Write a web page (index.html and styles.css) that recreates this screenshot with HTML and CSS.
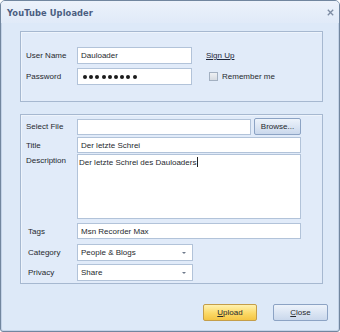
FILE: index.html
```html
<!DOCTYPE html>
<html>
<head>
<meta charset="utf-8">
<link rel="stylesheet" href="styles.css">
</head>
<body>
<div class="window">
  <div class="titlebar">
    <span class="title">YouTube Uploader</span>
    <svg class="close-x" width="7" height="7" viewBox="0 0 7 7"><path d="M0.8 0.8 L6.2 6.2 M6.2 0.8 L0.8 6.2" stroke="#7d8ca3" stroke-width="1.3" fill="none"/></svg>
  </div>
  <div class="group g1">
    <div class="row r-user">
      <span class="lbl">User Name</span>
      <div class="field w-user">Dauloader</div>
      <a class="link">Sign Up</a>
    </div>
    <div class="row r-pass">
      <span class="lbl">Password</span>
      <div class="field w-user pw"><i></i><i></i><i></i><i></i><i></i><i></i><i></i><i></i><i></i></div>
      <span class="check"></span>
      <span class="check-lbl">Remember me</span>
    </div>
  </div>
  <div class="group g2">
    <div class="row r-file">
      <span class="lbl">Select File</span>
      <div class="field w-file"></div>
      <div class="btn btn-blue browse">Browse...</div>
    </div>
    <div class="row r-title">
      <span class="lbl">Title</span>
      <div class="field w-full">Der letzte Schrei</div>
    </div>
    <div class="row r-desc">
      <span class="lbl lbl-top">Description</span>
      <div class="field w-full area">Der letzte Schrei des Dauloaders<span class="caret"></span></div>
    </div>
    <div class="row r-tags">
      <span class="lbl lbl-in">Tags</span>
      <div class="field w-full">Msn Recorder Max</div>
    </div>
    <div class="row r-cat">
      <span class="lbl lbl-in">Category</span>
      <div class="field w-sel sel">People &amp; Blogs<span class="arrow"></span></div>
    </div>
    <div class="row r-priv">
      <span class="lbl lbl-in">Privacy</span>
      <div class="field w-sel sel">Share<span class="arrow"></span></div>
    </div>
  </div>
  <div class="buttons">
    <div class="btn btn-yellow upload"><u>U</u>pload</div>
    <div class="btn btn-blue close"><u>C</u>lose</div>
  </div>
</div>
</body>
</html>
```
FILE: styles.css
```css
* { box-sizing: border-box; }
html, body { margin: 0; padding: 0; background: #ffffff; }
body { font-family: "Liberation Sans", Arial, sans-serif; font-size: 8px; color: #26292e; }

.window {
  width: 340px;
  height: 332px;
  border: 1px solid #71869f;
  border-radius: 5px 5px 3px 3px;
  background: #dde9f8;
  box-shadow: inset 0 0 0 1px #c3d3e8;
  overflow: hidden;
}

.titlebar {
  height: 22px;
  display: flex;
  align-items: center;
  justify-content: space-between;
  padding: 1px 5px 0 6px;
  background: linear-gradient(#ecf2fb, #e0eaf8);
}
.title {
  font-family: "DejaVu Sans", Verdana, sans-serif;
  font-weight: bold;
  font-size: 8.3px;
  letter-spacing: 0.1px;
  color: #4a5d80;
}
.close-x { display: block; }

.group {
  width: 303px;
  margin-left: 19px;
  border: 1px solid #a6b8d0;
  background: #e1ebf9;
  box-shadow: inset 1px 1px 0 #eef4fc;
  padding-left: 5px;
}
.g1 { margin-top: 8px; padding-top: 15px; padding-bottom: 16px; }
.g2 { margin-top: 12px; padding-top: 3px; padding-bottom: 2px; }

.row { display: flex; align-items: center; }
.r-pass { margin-top: 4px; }
.r-title { margin-top: 2px; }
.r-desc { margin-top: 1px; align-items: flex-start; }
.r-tags { margin-top: 4px; }
.r-cat { margin-top: 5px; }
.r-priv { margin-top: 3px; }

.lbl { width: 51px; flex: none; }
.lbl-in { padding-left: 2px; }
.lbl-top { padding-top: 2px; }

.field {
  height: 17px;
  background: #ffffff;
  border: 1px solid #b2c3d9;
  padding-left: 3px;
  display: flex;
  align-items: center;
  flex: none;
  white-space: nowrap;
}
.r-title .field, .r-tags .field { height: 16px; }
.r-file .field { height: 16px; margin-top: 1px; }
.w-user { width: 115px; }
.w-file { width: 174px; }
.w-full { width: 224px; }
.w-sel { width: 116px; position: relative; }
.area { height: 65px; align-items: flex-start; padding-top: 3px; padding-left: 1px; }
.caret { display: inline-block; width: 1px; height: 10px; background: #222; margin-top: -1px; margin-left: 0.5px; }

.pw { gap: 2.2px; padding-left: 5px; }
.pw i { display: block; width: 4px; height: 4px; border-radius: 50%; background: #1b1b1b; }

.link { margin-left: 14px; text-decoration: underline; color: #1d2538; }
.check {
  width: 9px; height: 9px;
  margin-left: 17px;
  border: 1px solid #a3b0c1;
  background: linear-gradient(#eef0f3, #d6dbe2);
  flex: none;
}
.check-lbl { margin-left: 4px; }

.arrow {
  position: absolute;
  right: 6px;
  top: 7px;
  width: 0; height: 0;
  border-left: 2.5px solid transparent;
  border-right: 2.5px solid transparent;
  border-top: 2.5px solid #6f7a8b;
}

.btn {
  display: flex;
  align-items: center;
  justify-content: center;
  height: 17px;
  flex: none;
}
.btn-blue {
  background: linear-gradient(#edf3fb, #cad8ec);
  border: 1px solid #8ca3c4;
  border-radius: 2px;
}
.btn-yellow {
  background: linear-gradient(#fff2b0, #fbd967 55%, #f4c544);
  border: 1px solid #c49e4a;
  border-radius: 2px;
}
.browse { width: 47px; margin-left: 3px; }

.buttons {
  display: flex;
  justify-content: flex-end;
  gap: 16px;
  margin-top: 20px;
  padding-right: 11px;
}
.upload { width: 54px; }
.close { width: 55px; }
u { text-decoration: underline; }
```
